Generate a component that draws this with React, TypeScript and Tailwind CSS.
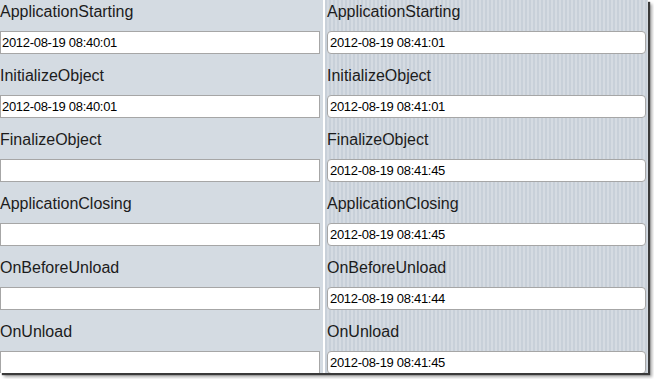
import React from "react";

type EventRow = {
    name: string;
    before: string;
    after: string;
};

const rows: EventRow[] = [
    { name: "ApplicationStarting", before: "2012-08-19 08:40:01", after: "2012-08-19 08:41:01" },
    { name: "InitializeObject", before: "2012-08-19 08:40:01", after: "2012-08-19 08:41:01" },
    { name: "FinalizeObject", before: "", after: "2012-08-19 08:41:45" },
    { name: "ApplicationClosing", before: "", after: "2012-08-19 08:41:45" },
    { name: "OnBeforeUnload", before: "", after: "2012-08-19 08:41:44" },
    { name: "OnUnload", before: "", after: "2012-08-19 08:41:45" },
];

const Field = ({ label, value, rounded }: { label: string; value: string; rounded?: boolean }) => (
    <div className="mb-[10px]">
        <div className="h-[31px] pt-[2px] text-[16px] leading-[20px] text-[#1c1c1c] whitespace-nowrap">{label}</div>
        <input
            readOnly
            value={value}
            className={`block w-full h-[23px] px-[1px] bg-white border border-[#a6a6a6] text-[13px] tracking-[-0.3px] text-black outline-none font-['Liberation_Sans',Arial,sans-serif] ${rounded ? "rounded-[4px] px-[2px]" : ""}`}
        />
    </div>
);

export default function App() {
    return (
        <div className="w-[654px] h-[379px] overflow-hidden bg-white font-['Liberation_Sans',Arial,sans-serif]">
            <div className="w-[648px] h-[373px] flex overflow-hidden shadow-[2px_2px_1px_#3a3a3a,4px_4px_3px_rgba(0,0,0,0.35)]">
                {/* left: before */}
                <div className="w-[323px] bg-[#d4dbe2] pr-[3px]">
                    {rows.map((r) => (
                        <Field key={r.name} label={r.name} value={r.before} />
                    ))}
                </div>
                <div className="w-[2px] bg-white" />
                {/* right: after */}
                <div className="flex-1 pl-[2px] pr-[2px] bg-[repeating-linear-gradient(90deg,#c8d0d9_0px,#c8d0d9_2px,#d5dbe2_2px,#d5dbe2_4px)]">
                    {rows.map((r) => (
                        <Field key={r.name} label={r.name} value={r.after} rounded />
                    ))}
                </div>
            </div>
        </div>
    );
}
